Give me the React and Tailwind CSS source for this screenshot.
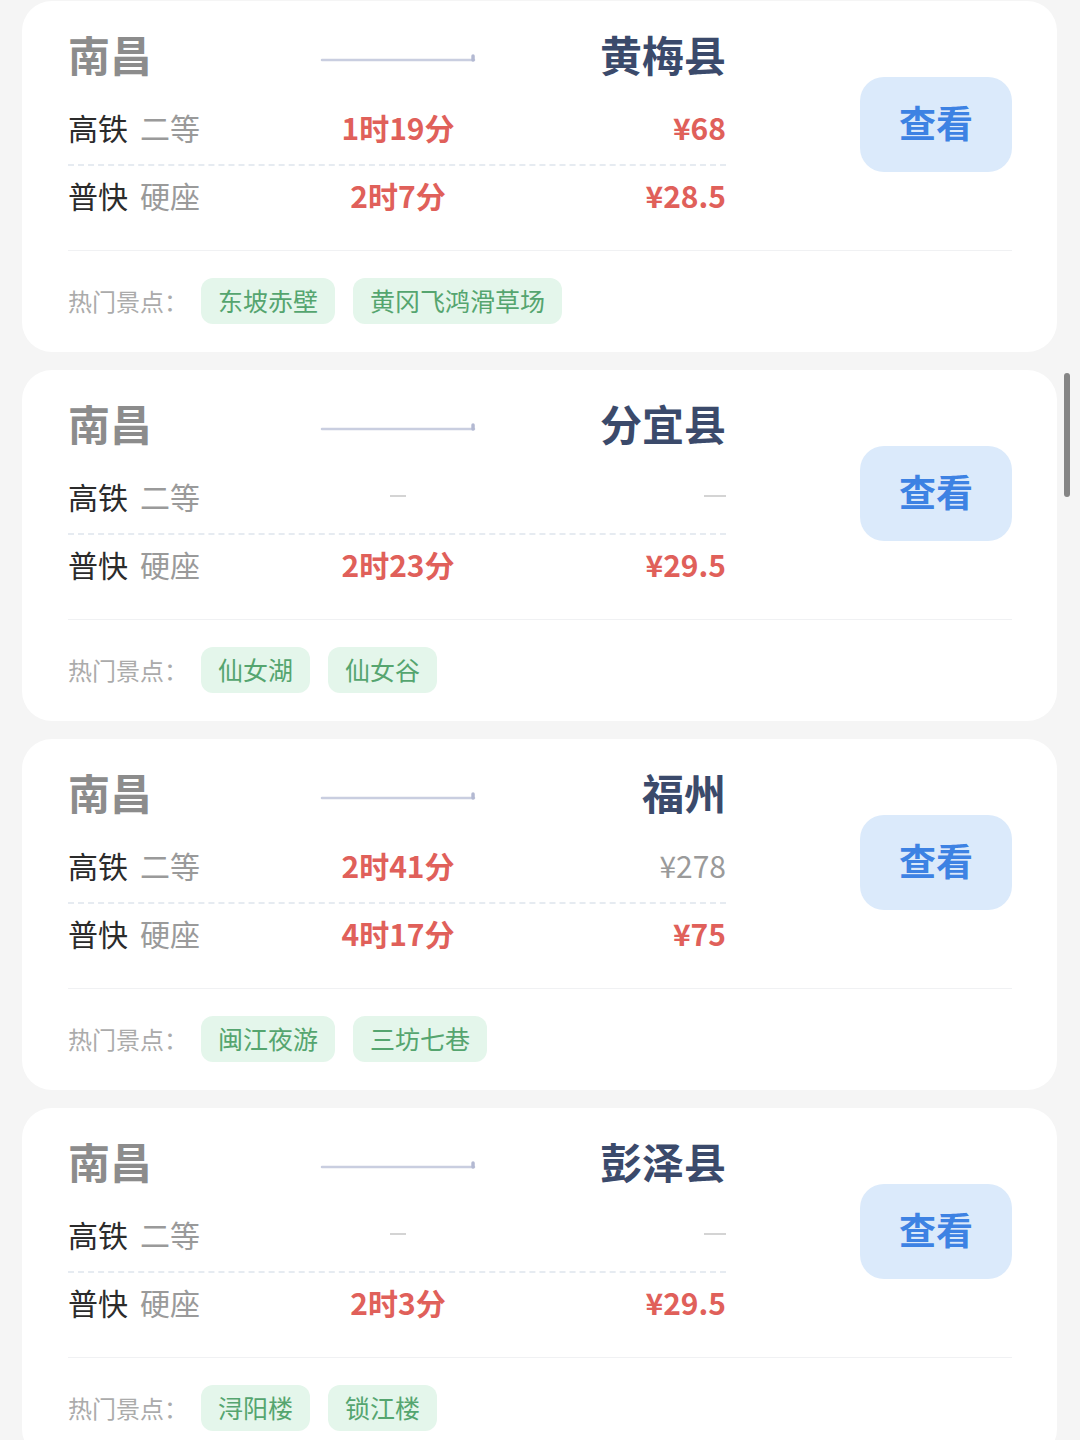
const cards = [
  {
    to: "黄梅县",
    rows: [
      { type: "高铁", seat: "二等", time: "1时19分", price: "¥68" },
      { type: "普快", seat: "硬座", time: "2时7分", price: "¥28.5" },
    ],
    spots: ["东坡赤壁", "黄冈飞鸿滑草场"],
  },
  {
    to: "分宜县",
    rows: [
      { type: "高铁", seat: "二等", time: null, price: null },
      { type: "普快", seat: "硬座", time: "2时23分", price: "¥29.5" },
    ],
    spots: ["仙女湖", "仙女谷"],
  },
  {
    to: "福州",
    rows: [
      { type: "高铁", seat: "二等", time: "2时41分", price: "¥278", muted: true },
      { type: "普快", seat: "硬座", time: "4时17分", price: "¥75" },
    ],
    spots: ["闽江夜游", "三坊七巷"],
  },
  {
    to: "彭泽县",
    rows: [
      { type: "高铁", seat: "二等", time: null, price: null },
      { type: "普快", seat: "硬座", time: "2时3分", price: "¥29.5" },
    ],
    spots: ["浔阳楼", "锁江楼"],
  },
];

const Dash = ({ w }) => <span className={"block h-[2px] bg-[#d4d4d4] " + w} />;

function Arrow() {
  return (
    <svg width="158" height="10" viewBox="0 0 158 10" className="block">
      <line x1="2" y1="7" x2="156" y2="7" stroke="#c9cee0" strokeWidth="2.5" strokeLinecap="round" />
      <line x1="155" y1="7" x2="155" y2="3" stroke="#b3b9d2" strokeWidth="3.5" strokeLinecap="round" />
    </svg>
  );
}

function Row({ r, first }) {
  return (
    <div
      className={
        "grid grid-cols-[252px_156px_1fr] items-center " +
        (first ? "h-[76px] border-b-2 border-dashed border-[#e6ebf1]" : "h-[58px]")
      }
    >
      <div className="text-[30px] leading-none">
        <span className="text-[#2b2b2b]">{r.type}</span>
        <span className="ml-[12px] text-[#9a9a9a]">{r.seat}</span>
      </div>
      <div className="flex justify-center">
        {r.time ? (
          <span className="text-[30px] font-bold leading-none text-[#e0605a]">{r.time}</span>
        ) : (
          <Dash w="w-[16px]" />
        )}
      </div>
      <div className="flex justify-end">
        {r.price ? (
          r.muted ? (
            <span className="text-[30px] leading-none text-[#9a9a9a]">{r.price}</span>
          ) : (
            <span className="text-[30px] font-bold leading-none text-[#e0605a]">{r.price}</span>
          )
        ) : (
          <Dash w="w-[22px]" />
        )}
      </div>
    </div>
  );
}

function Card({ c }) {
  return (
    <div className="rounded-[30px] bg-white pl-[46px] pr-[45px] pt-[23px] pb-[28px]">
      <div className="flex items-start justify-between">
        <div className="w-[658px]">
          <div className="grid h-[60px] grid-cols-[252px_156px_1fr] items-center">
            <span className="text-[42px] font-semibold leading-none text-[#8c8c8c]">南昌</span>
            <div className="flex justify-center pt-[8px]">
              <Arrow />
            </div>
            <span className="text-right text-[42px] font-bold leading-none text-[#3b4a6b]">{c.to}</span>
          </div>
          <div className="mt-[6px]">
            <Row r={c.rows[0]} first />
            <Row r={c.rows[1]} />
          </div>
        </div>
        <button
          type="button"
          className="mt-[53px] grid h-[95px] w-[152px] place-items-center rounded-[24px] bg-[#dbeafb] pb-[4px] text-[37px] font-bold text-[#3d82e3]"
        >
          查看
        </button>
      </div>
      <div className="mt-[26px] h-px bg-[#f0f1f3]" />
      <div className="mt-[27px] flex h-[46px] items-center">
        <span className="mr-[13px] text-[24px] text-[#ababab]">热门景点：</span>
        {c.spots.map((s, i) => (
          <span
            key={i}
            className="mr-[18px] flex h-[46px] items-center rounded-[12px] bg-[#e4f6eb] px-[17px] text-[25px] text-[#55a56f]"
          >
            {s}
          </span>
        ))}
      </div>
    </div>
  );
}

export default function App() {
  return (
    <div
      className="relative min-h-[1440px] bg-[#f5f5f5] px-[22px] pt-[1px]"
      style={{ fontFamily: '"Noto Sans CJK SC", "Noto Sans", sans-serif' }}
    >
      <div className="flex w-[1035px] flex-col gap-[18px]">
        {cards.map((c, i) => (
          <Card key={i} c={c} />
        ))}
      </div>
      {/* scrollbar */}
      <div className="absolute left-[1064px] top-[373px] h-[124px] w-[6px] rounded-full bg-[#858585]" />
    </div>
  );
}
